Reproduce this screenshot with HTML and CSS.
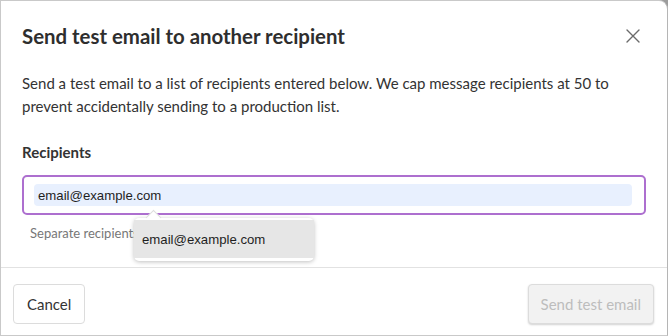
FILE: index.html
```html
<!DOCTYPE html>
<html lang="en">
<head>
<meta charset="utf-8">
<title>Send test email</title>
<link rel="stylesheet" href="styles.css">
</head>
<body>
<div class="dialog">
  <header class="head">
    <h1 class="title">Send test email to another recipient</h1>
    <button class="close" aria-label="Close">
      <svg width="14" height="14" viewBox="0 0 14 14"><path d="M1 1L13 13M13 1L1 13" stroke="#6b6b6b" stroke-width="1.4" fill="none" stroke-linecap="round"/></svg>
    </button>
  </header>
  <div class="content">
    <p class="desc">Send a test email to a list of recipients entered below. We cap message recipients at 50 to prevent accidentally sending to a production list.</p>
    <div class="label">Recipients</div>
    <div class="field">
      <div class="input"><span class="autofill">email@example.com</span></div>
      <p class="hint">Separate recipients with a comma</p>
      <div class="popup">
        <span class="arrow"></span>
        <div class="option">email@example.com</div>
      </div>
    </div>
  </div>
  <footer class="foot">
    <button class="btn">Cancel</button>
    <button class="btn btn-disabled">Send test email</button>
  </footer>
</div>
</body>
</html>
```
FILE: styles.css
```css
* { box-sizing: border-box; }
html, body { margin: 0; padding: 0; }
body {
  background: #9c9c9c;
  width: 668px;
  height: 336px;
  overflow: hidden;
  font-family: "Lato", "Noto Sans", sans-serif;
  color: #2f2f2f;
}
.dialog {
  width: 668px;
  height: 336px;
  background: #fff;
  border: 1px solid #c9c9c9;
  border-right-color: #b5b5b5;
  border-radius: 0 9px 0 0;
  display: flex;
  flex-direction: column;
}
.head {
  display: flex;
  align-items: center;
  justify-content: space-between;
  padding: 20px 27px 0 21px;
  height: 49px;
}
.title {
  margin: 0;
  font-size: 20.4px;
  line-height: 28px;
  font-weight: 700;
  color: #2e2e2e;
}
.close {
  border: 0;
  background: none;
  padding: 0;
  width: 14px;
  height: 14px;
  display: flex;
}
.content {
  padding: 22px 21px 0 21px;
  flex: 1;
  border-bottom: 1px solid #e2e2e2;
}
.desc {
  margin: 0;
  font-size: 15px;
  line-height: 23px;
  color: #333;
}
.label {
  margin-top: 24px;
  font-size: 15px;
  line-height: 20px;
  font-weight: 700;
  color: #333;
}
.field {
  position: relative;
  margin-top: 13px;
}
.input {
  height: 40px;
  border: 2px solid #ad6fcf;
  border-radius: 5px;
  padding: 7px 12px 7px 10px;
}
.autofill {
  display: block;
  height: 22px;
  background: #e8f0fe;
  border-radius: 4px;
  padding-left: 4px;
  font-family: "Liberation Sans", Arial, sans-serif;
  font-size: 13.2px;
  line-height: 23px;
  color: #1e1e1e;
}
.hint {
  margin: 10px 0 0 8px;
  font-size: 13px;
  line-height: 16px;
  color: #777;
}
.popup {
  position: absolute;
  left: 112px;
  top: 43px;
  width: 180px;
  background: #fff;
  border-radius: 5px;
  box-shadow: 0 1px 4px rgba(0,0,0,0.25);
  padding: 2px 0 3px;
}
.arrow {
  position: absolute;
  left: 14px;
  top: -6px;
  width: 11px;
  height: 11px;
  background: #fff;
  border-left: 1px solid #ddd;
  border-top: 1px solid #ddd;
  transform: rotate(45deg);
}
.option {
  position: relative;
  background: #e6e6e6;
  height: 38px;
  padding-left: 8px;
  font-family: "Liberation Sans", Arial, sans-serif;
  font-size: 13.2px;
  line-height: 39px;
  color: #1e1e1e;
}
.foot {
  display: flex;
  justify-content: space-between;
  align-items: center;
  padding: 16px 13px 11px 12px;
}
.btn {
  height: 40px;
  padding: 0 13px;
  border: 1px solid #dcdcdc;
  border-radius: 4px;
  background: #fff;
  font-family: "Lato", "Noto Sans", sans-serif;
  font-size: 15px;
  color: #333;
}
.btn-disabled {
  background: #f2f2f2;
  color: #bdbdbd;
  box-shadow: 0 1px 2px rgba(0,0,0,0.18);
  padding: 0 12px;
}
```
